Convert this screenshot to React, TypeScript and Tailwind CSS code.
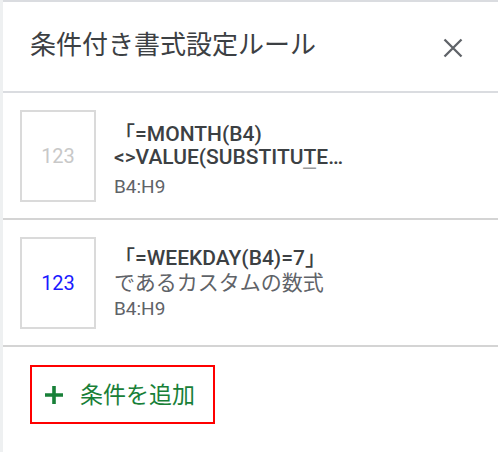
import React from "react";

const font = { fontFamily: "Roboto, 'Noto Sans CJK JP', sans-serif" };

function RuleBox({ color }: { color: string }) {
  return (
    <div className="w-[76px] h-[92px] border-2 border-[#dadada] flex items-center justify-center shrink-0">
      <span className={`text-[20px] ${color}`}>123</span>
    </div>
  );
}

export default function App() {
  return (
    <div className="w-[498px] h-[452px] bg-white flex overflow-hidden" style={font}>
      <div className="w-[3px] h-full bg-[#eef0f1] shrink-0" />
      <div className="flex-1 flex flex-col border-t-2 border-[#dadce0]">
        {/* Header */}
        <div className="h-[91px] flex items-center justify-between pl-[27px] pr-[35px] border-b-2 border-[#dadce0] shrink-0">
          <span className="text-[26px] text-[#3c4043] leading-none pb-[3px]">条件付き書式設定ルール</span>
          <svg width="20" height="20" viewBox="0 0 20 20" className="mt-[2px]">
            <path d="M1.5 1.5 L18.5 18.5 M18.5 1.5 L1.5 18.5" stroke="#5f6368" strokeWidth="2.3" fill="none" />
          </svg>
        </div>

        {/* Rule 1 */}
        <div className="h-[127px] border-b-2 border-[#d4d4d4] flex pl-[17px] pt-[17px] shrink-0">
          <RuleBox color="text-[#c8c8c8]" />
          <div className="ml-[18px] flex flex-col pt-[13px] w-[240px]">
            <div className="h-[46px] overflow-hidden text-[21px] leading-[23px] font-medium text-[#3c4043]">
              <div className="whitespace-nowrap">「=MONTH(B4)</div>
              <div className="whitespace-nowrap">&lt;&gt;VALUE(SUBSTITUTE…</div>
              <div className="whitespace-nowrap pl-[172px] mt-[-3px] text-[#9a9a9a] font-normal">',"月</div>
            </div>
            <div className="text-[19px] leading-[24px] text-[#5f6368] mt-[6px]">B4:H9</div>
          </div>
        </div>

        {/* Rule 2 */}
        <div className="h-[127px] border-b-2 border-[#d4d4d4] flex pl-[17px] pt-[17px] shrink-0">
          <RuleBox color="text-[#1a1aff]" />
          <div className="ml-[18px] flex flex-col pt-[9px]">
            <div className="text-[21px] leading-[25px] font-medium text-[#3c4043] whitespace-nowrap">「=WEEKDAY(B4)=7」</div>
            <div className="text-[21px] leading-[25px] text-[#5f6368] whitespace-nowrap">であるカスタムの数式</div>
            <div className="text-[19px] leading-[24px] text-[#5f6368] mt-[1px]">B4:H9</div>
          </div>
        </div>

        {/* Add button */}
        <div className="flex-1 pl-[27px] pt-[18px]">
          <div className="w-[185px] h-[59px] border-2 border-[#ff0000] flex items-center pl-[13px]">
            <svg width="18" height="20" viewBox="0 0 18 20">
              <path d="M9 1 V19 M0 10 H18" stroke="#188038" strokeWidth="3.6" fill="none" />
            </svg>
            <span className="ml-[17px] text-[23px] text-[#188038] leading-none pt-[2px]">条件を追加</span>
          </div>
        </div>
      </div>
    </div>
  );
}
